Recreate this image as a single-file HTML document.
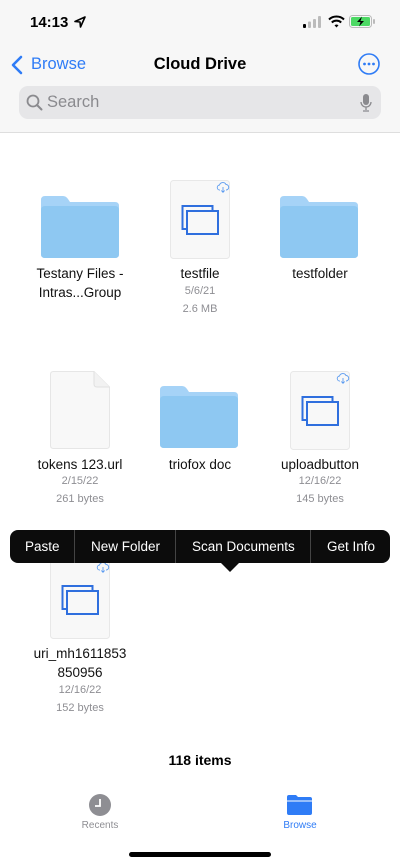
<!DOCTYPE html>
<html><head><meta charset="utf-8"><style>
*{margin:0;padding:0;box-sizing:border-box}
body{width:400px;height:865px;position:relative;overflow:hidden;background:#fff;font-family:"Liberation Sans",sans-serif;color:#000}
.a{position:absolute}
.hdr{left:0;top:0;width:400px;height:133px;background:#f7f7f7;border-bottom:1px solid #dedede}
.lbl{position:absolute;width:120px;text-align:center;font-size:13.5px;line-height:19px;color:#111}
.meta{position:absolute;width:120px;text-align:center;font-size:11px;line-height:18px;color:#8e8e93}
.menu{left:10px;top:530px;width:380px;height:33px;background:#0c0c0c;border-radius:8px;color:#fff;font-size:13.5px}
.menu span{position:absolute;top:9px}
.sep{position:absolute;top:0;width:1px;height:33px;background:#444}
</style></head><body>
<div class="a hdr"></div>
<div class="a" style="left:30px;top:14px;font-size:15px;font-weight:bold">14:13</div>
<svg class="a" style="left:73px;top:15px" width="14" height="14" viewBox="0 0 14 14"><path d="M12 2 L2 6.5 L7 7 L7.5 12 Z" fill="none" stroke="#000" stroke-width="1.6" stroke-linejoin="round"/></svg>
<svg class="a" style="left:303px;top:16px" width="18" height="12"><rect x="0" y="8" width="3" height="4" rx="1" fill="#000"/><rect x="5" y="5.5" width="3" height="6.5" rx="1" fill="#bbb"/><rect x="10" y="3" width="3" height="9" rx="1" fill="#bbb"/><rect x="15" y="0" width="3" height="12" rx="1" fill="#bbb"/></svg>
<svg class="a" style="left:328px;top:15px" width="17" height="13" viewBox="0 0 17 13"><path d="M1 4.5 A11 11 0 0 1 16 4.5" fill="none" stroke="#000" stroke-width="2"/><path d="M3.8 7.5 A7 7 0 0 1 13.2 7.5" fill="none" stroke="#000" stroke-width="2"/><path d="M6.5 10.3 L8.5 12.5 L10.5 10.3 A3 3 0 0 0 6.5 10.3Z" fill="#000"/></svg>
<svg class="a" style="left:349px;top:15px" width="27" height="13"><rect x="0.5" y="0.5" width="22" height="12" rx="3" fill="none" stroke="#bbb"/><rect x="2" y="2" width="19" height="9" rx="1.5" fill="#4cd964"/><rect x="24" y="4" width="2" height="5" rx="1" fill="#bbb"/><path d="M13 1.5 L8 7 L11.5 7 L10 11.5 L15 6 L11.5 6 Z" fill="#000"/></svg>
<svg class="a" style="left:11px;top:55px" width="12" height="20"><path d="M10 2 L2 10 L10 18" fill="none" stroke="#2f7cf6" stroke-width="2.6" stroke-linecap="round" stroke-linejoin="round"/></svg>
<div class="a" style="left:31px;top:55px;font-size:16.5px;color:#2f7cf6">Browse</div>
<div class="a" style="left:0;width:400px;top:55px;text-align:center;font-size:16.5px;font-weight:bold">Cloud Drive</div>
<svg class="a" style="left:358px;top:53px" width="22" height="22"><circle cx="11" cy="11" r="10" fill="none" stroke="#2f7cf6" stroke-width="1.6"/><circle cx="6.5" cy="11" r="1.4" fill="#2f7cf6"/><circle cx="11" cy="11" r="1.4" fill="#2f7cf6"/><circle cx="15.5" cy="11" r="1.4" fill="#2f7cf6"/></svg>
<div class="a" style="left:19px;top:86px;width:362px;height:33px;background:#e6e6e8;border-radius:9px"></div>
<svg class="a" style="left:26px;top:94px" width="17" height="17"><circle cx="7" cy="7" r="5.5" fill="none" stroke="#8a8a8e" stroke-width="1.8"/><path d="M11 11 L15.5 15.5" stroke="#8a8a8e" stroke-width="2" stroke-linecap="round"/></svg>
<div class="a" style="left:47px;top:93px;font-size:16.5px;color:#8a8a8e">Search</div>
<svg class="a" style="left:360px;top:94px" width="12" height="18"><rect x="3" y="0" width="6" height="11" rx="3" fill="#8a8a8e"/><path d="M1 8 A5 5 0 0 0 11 8 M6 13 V16 M3 17 H9" fill="none" stroke="#8a8a8e" stroke-width="1.3"/></svg>

<svg width="0" height="0" style="position:absolute"><defs>
<g id="fold"><path d="M0 4 Q0 0 4 0 L22 0 Q25 0 27 3 L29 6 L74 6 Q78 6 78 10 L78 58 Q78 62 74 62 L4 62 Q0 62 0 58 Z" fill="#a6d3f7"/><path d="M0 14 Q0 10 4 10 L74 10 Q78 10 78 14 L78 58 Q78 62 74 62 L4 62 Q0 62 0 58 Z" fill="#8ec8f2"/></g>
<g id="doc"><rect x="0.5" y="0.5" width="59" height="78" rx="3" fill="#f8f8f8" stroke="#e8e8e8"/><rect x="12.5" y="26" width="30" height="23" fill="none" stroke="#2f6fde" stroke-width="2"/><rect x="17" y="31" width="31" height="23" fill="#f8f8f8" stroke="#2f6fde" stroke-width="2"/><path d="M50 10 A2.5 2.5 0 0 1 49.5 5 A3.5 3.5 0 0 1 56 4.5 A2.5 2.5 0 0 1 56 10 M53 7 V12 M51.3 10.5 L53 12.3 L54.7 10.5" fill="none" stroke="#5b9bf0" stroke-width="0.9"/></g>
</defs></svg>

<svg class="a" style="left:41px;top:196px" width="78" height="62"><use href="#fold"/></svg>
<svg class="a" style="left:170px;top:180px" width="60" height="79"><use href="#doc"/></svg>
<svg class="a" style="left:280px;top:196px" width="78" height="62"><use href="#fold"/></svg>
<div class="lbl" style="left:20px;top:264px">Testany Files -<br>Intras...Group</div>
<div class="lbl" style="left:140px;top:264px">testfile</div>
<div class="meta" style="left:140px;top:282px">5/6/21<br>2.6 MB</div>
<div class="lbl" style="left:260px;top:264px">testfolder</div>

<svg class="a" style="left:50px;top:371px" width="60" height="78"><path d="M3.5 0.5 L44 0.5 L59.5 16 L59.5 74.5 Q59.5 77.5 56.5 77.5 L3.5 77.5 Q0.5 77.5 0.5 74.5 L0.5 3.5 Q0.5 0.5 3.5 0.5Z" fill="#f8f8f8" stroke="#e6e6e6"/><path d="M44 0.5 L44 13 Q44 16 47 16 L59.5 16" fill="#f2f2f2" stroke="#e0e0e0"/></svg>
<svg class="a" style="left:160px;top:386px" width="78" height="62"><use href="#fold"/></svg>
<svg class="a" style="left:290px;top:371px" width="60" height="79"><use href="#doc"/></svg>
<div class="lbl" style="left:20px;top:455px">tokens 123.url</div>
<div class="meta" style="left:20px;top:472px">2/15/22<br>261 bytes</div>
<div class="lbl" style="left:140px;top:455px">triofox doc</div>
<div class="lbl" style="left:260px;top:455px">uploadbutton</div>
<div class="meta" style="left:260px;top:472px">12/16/22<br>145 bytes</div>

<svg class="a" style="left:50px;top:560px" width="60" height="79"><use href="#doc"/></svg>
<div class="lbl" style="left:20px;top:644px">uri_mh1611853<br>850956</div>
<div class="meta" style="left:20px;top:681px">12/16/22<br>152 bytes</div>

<div class="a menu">
<span style="left:15px">Paste</span><div class="sep" style="left:64px"></div>
<span style="left:81px">New Folder</span><div class="sep" style="left:165px"></div>
<span style="left:182px">Scan Documents</span><div class="sep" style="left:300px"></div>
<span style="left:317px">Get Info</span>
</div>
<svg class="a" style="left:220px;top:562px" width="20" height="10"><path d="M0 0 L20 0 L10 10 Z" fill="#0c0c0c"/></svg>

<div class="a" style="left:0;width:400px;top:752px;text-align:center;font-size:14px;font-weight:bold">118 items</div>
<svg class="a" style="left:89px;top:794px" width="22" height="22"><circle cx="11" cy="11" r="11" fill="#8e8e93"/><path d="M11 5 V12 H6" fill="none" stroke="#fff" stroke-width="1.8"/></svg>
<div class="a" style="left:60px;width:80px;top:820px;text-align:center;font-size:10px;color:#8e8e93">Recents</div>
<svg class="a" style="left:287px;top:795px" width="25" height="20"><path d="M0 2 Q0 0 2 0 L9 0 L11 2 L23 2 Q25 2 25 4 L25 18 Q25 20 23 20 L2 20 Q0 20 0 18Z" fill="#2f7cf6"/><path d="M0 6 H25" stroke="#fff" stroke-width="1"/></svg>
<div class="a" style="left:260px;width:80px;top:820px;text-align:center;font-size:10px;color:#2f7cf6">Browse</div>
<div class="a" style="left:129px;top:852px;width:142px;height:5px;border-radius:3px;background:#000"></div>
</body></html>
